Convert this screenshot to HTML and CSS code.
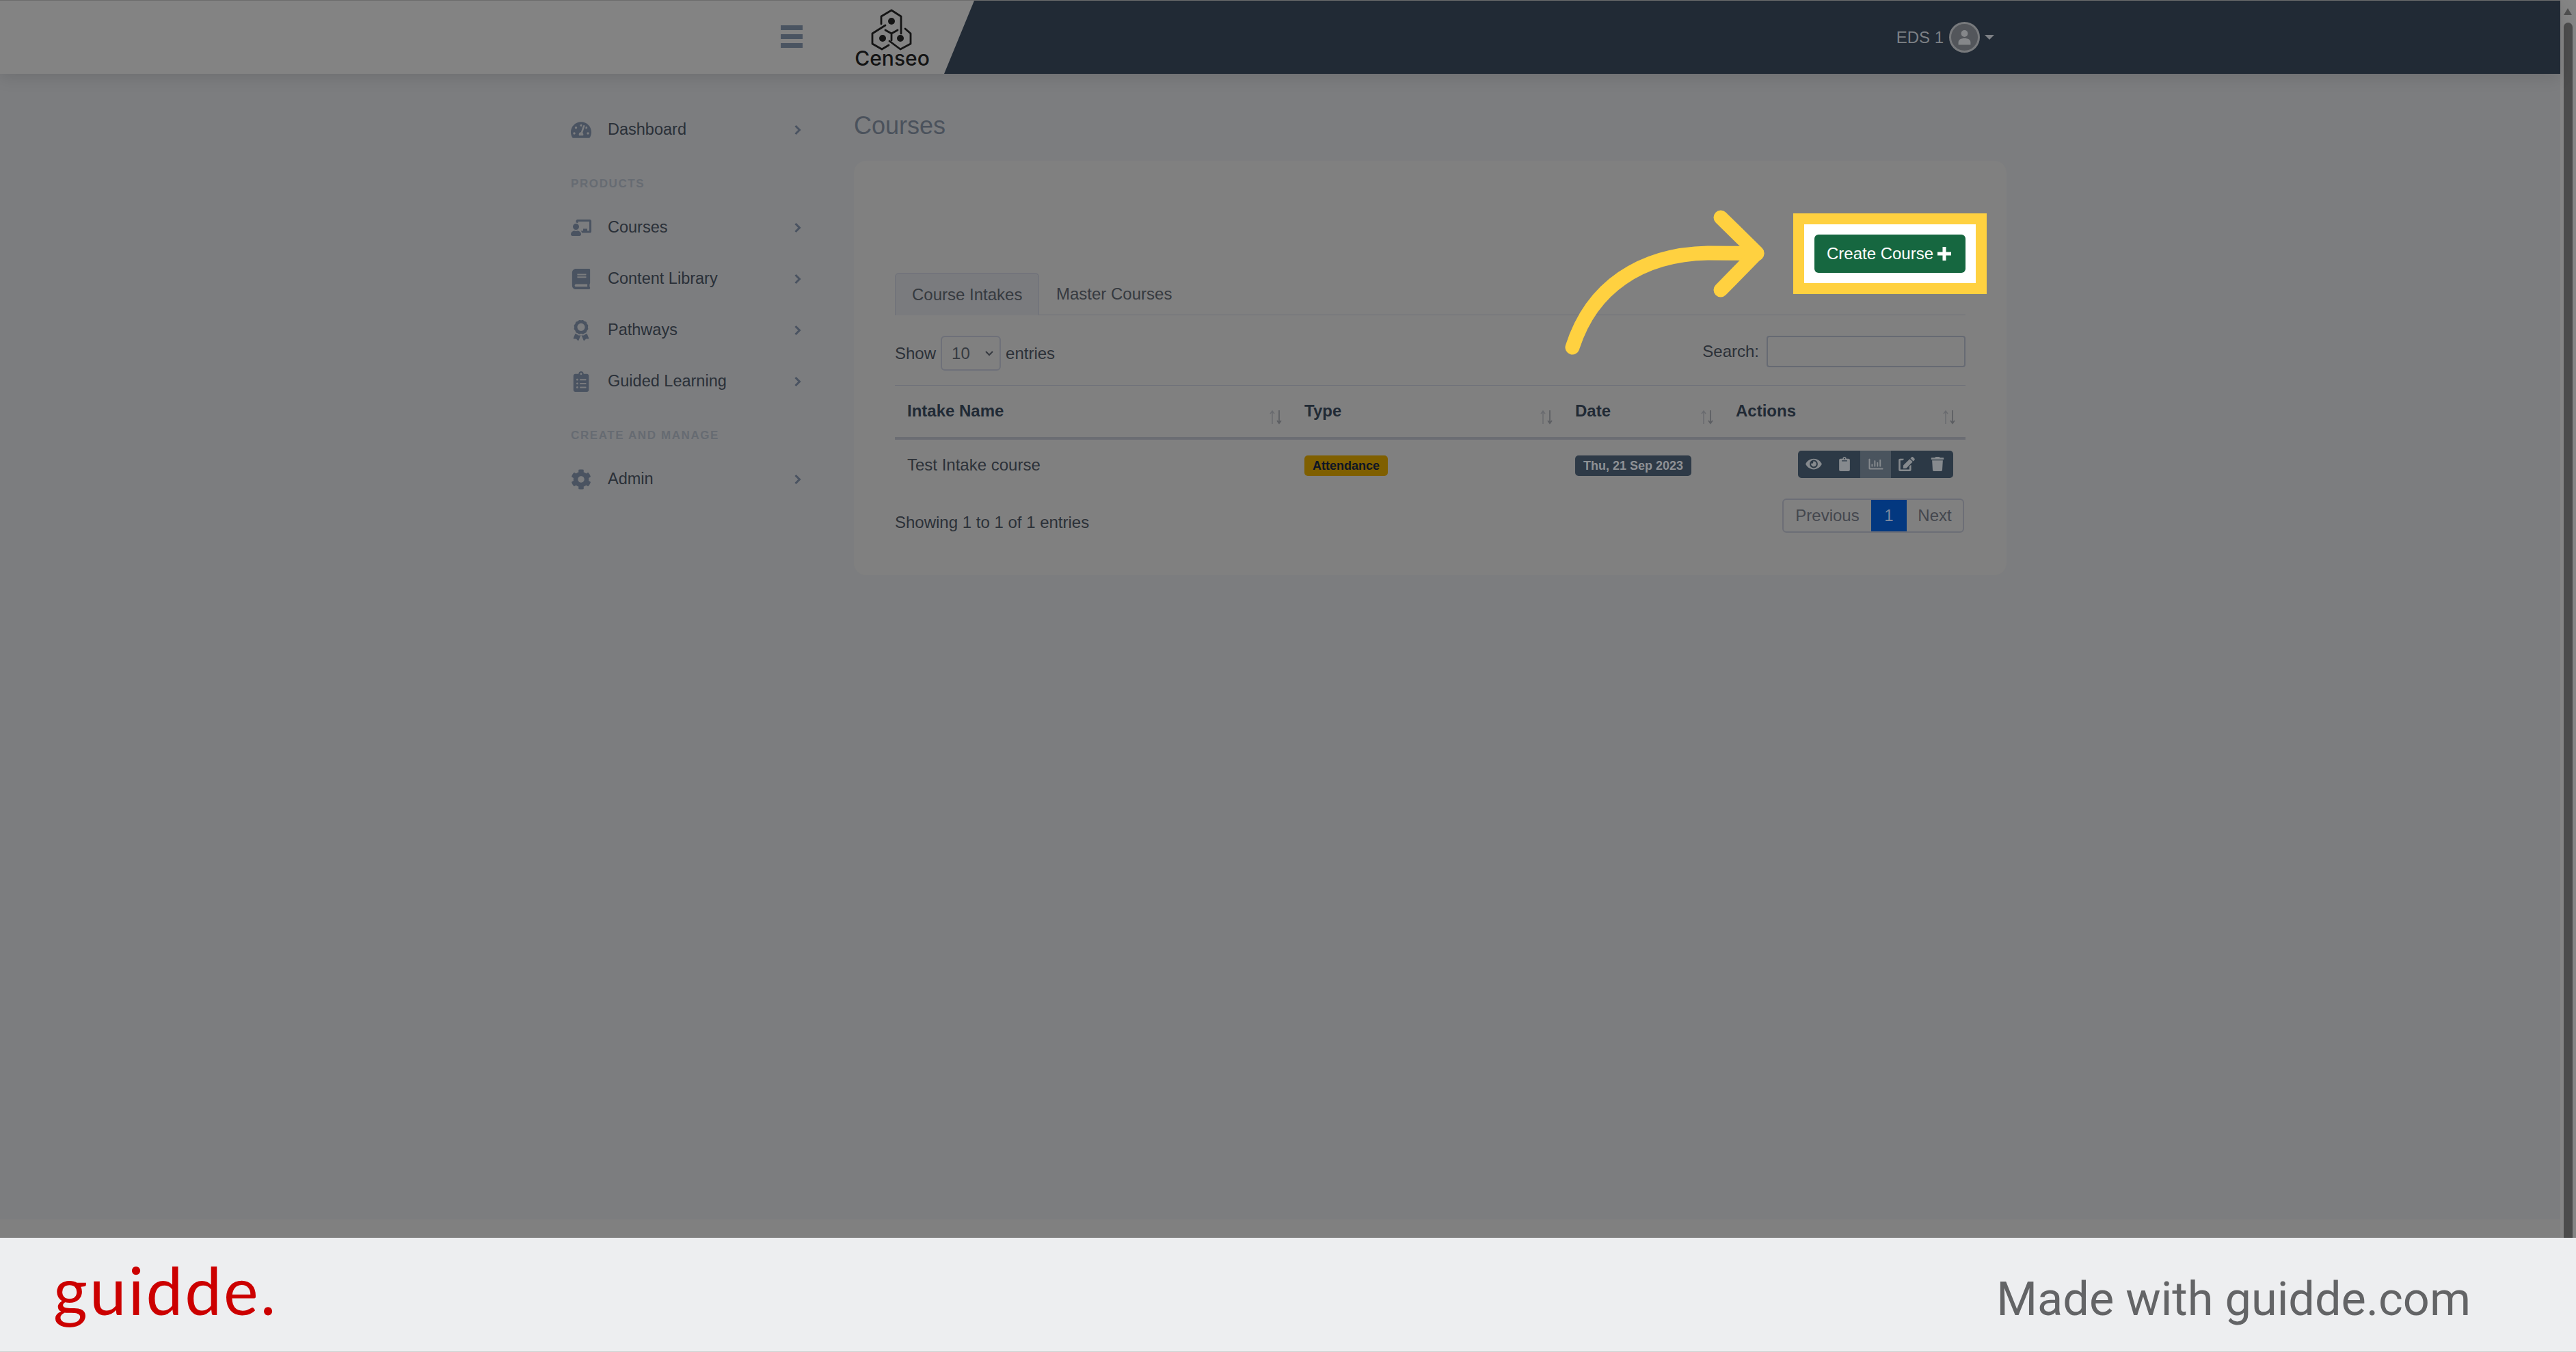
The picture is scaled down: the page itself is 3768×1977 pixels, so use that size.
FILE: index.html
```html
<!DOCTYPE html>
<html lang="en">
<head>
  <meta charset="UTF-8">
  <title>Courses</title>
  <link rel="stylesheet" href="styles.css">
</head>

<body>
  <svg class="defs" width="0" height="0">
    <symbol id="i-chevron" viewBox="0 0 11 16"><path d="M2.500 2l6 6-6 6" fill="none" stroke="currentColor" stroke-width="3"/></symbol>
    <symbol id="i-sort" viewBox="0 0 22 22"><path d="M6 21V2M3 6l3-4 3 4" fill="none" stroke="#696b6f" stroke-width="1.500"/><path d="M16 1v19M13 16l3 4 3-4" fill="none" stroke="#5c5e62" stroke-width="1.700"/></symbol>
  </svg>

  <div class="window">
    <div class="page">
      <header class="topbar">
        <div class="topbar-left">
          <div class="burger"><span></span><span></span><span></span></div>
          <div class="logo">
            <svg class="logo-mark" viewBox="0 0 90 70">
              <g fill="none" stroke="#141414" stroke-width="2.800" stroke-linejoin="round" stroke-linecap="round">
                <path d="M29 28V17L44 8l14 9v25"/>
                <path d="M35 30L16 42v15l14 8 10-6"/>
                <path d="M41 53l16 12 15-8V42l-8-7"/>
                <path d="M35 37l9 5 9-5M44 42v10"/>
              </g>
              <g fill="#141414">
                <circle cx="44" cy="24" r="5"/>
                <circle cx="31" cy="49" r="5"/>
                <circle cx="57" cy="49" r="5"/>
              </g>
            </svg>
            <span class="logo-name">Censeo</span>
          </div>
        </div>
        <div class="topbar-right">
          <span class="user-name">EDS 1</span>
          <span class="avatar">
            <svg viewBox="0 0 24 24"><circle cx="12" cy="8" r="3.600"/><path d="M5.500 20v-2.500c0-3 2.500-4.500 6.500-4.500s6.500 1.500 6.500 4.500V20z"/></svg>
          </span>
          <span class="caret"></span>
        </div>
      </header>

      <div class="layout">
        <nav class="sidebar">
          <a class="side-item" href="#">
            <svg class="side-icon" viewBox="0 0 576 512"><path d="M288 32C128.94 32 0 160.94 0 320c0 52.8 14.25 102.26 39.06 144.8 5.61 9.62 16.3 15.2 27.44 15.2h443c11.14 0 21.83-5.58 27.44-15.2C561.75 422.26 576 372.8 576 320c0-159.06-128.94-288-288-288zm0 64c14.71 0 26.58 10.13 30.32 23.65-1.11 2.26-2.64 4.23-3.45 6.67l-9.22 27.67c-5.13 3.49-10.97 6.01-17.64 6.01-17.67 0-32-14.33-32-32S270.33 96 288 96zM96 384c-17.67 0-32-14.33-32-32s14.33-32 32-32 32 14.33 32 32-14.33 32-32 32zm48-160c-17.67 0-32-14.33-32-32s14.33-32 32-32 32 14.33 32 32-14.33 32-32 32zm246.77-72.41l-61.33 184C343.13 347.33 352 364.54 352 384c0 11.72-3.38 22.55-8.88 32H232.88c-5.5-9.45-8.88-20.28-8.88-32 0-33.94 26.5-61.43 59.9-63.59l61.34-184.01c4.17-12.56 17.73-19.45 30.36-15.17 12.57 4.19 19.35 17.79 15.17 30.36zm14.66 57.2l15.52-46.55c3.47-1.29 7.13-2.23 11.05-2.23 17.67 0 32 14.33 32 32s-14.33 32-32 32c-11.38-.01-20.89-6.28-26.57-15.22zM480 384c-17.67 0-32-14.33-32-32s14.33-32 32-32 32 14.33 32 32-14.33 32-32 32z"/></svg>
            <span class="side-label">Dashboard</span>
            <svg class="side-chevron"><use href="#i-chevron"/></svg>
          </a>

          <div class="side-heading">PRODUCTS</div>

          <a class="side-item" href="#">
            <svg class="side-icon" viewBox="0 0 640 512"><path d="M208 352c-2.39 0-4.78.35-7.06 1.09C187.98 357.3 174.35 360 160 360c-14.35 0-27.98-2.7-40.95-6.91-2.28-.74-4.66-1.09-7.05-1.09C49.94 352-.33 402.48 0 464.62.14 490.88 21.73 512 48 512h224c26.27 0 47.86-21.12 48-47.38.33-62.14-49.94-112.62-112-112.62zm-48-32c53.02 0 96-42.98 96-96s-42.98-96-96-96-96 42.98-96 96 42.98 96 96 96zM592 0H208c-26.47 0-48 22.25-48 49.59V96c23.42 0 45.1 6.78 64 17.8V64h352v288h-64v-64H384v64h-76.24c19.1 16.69 33.12 38.73 39.69 64H592c26.47 0 48-22.25 48-49.59V49.59C640 22.25 618.47 0 592 0z"/></svg>
            <span class="side-label">Courses</span>
            <svg class="side-chevron"><use href="#i-chevron"/></svg>
          </a>
          <a class="side-item" href="#">
            <svg class="side-icon" viewBox="0 0 448 512"><path d="M448 360V24c0-13.3-10.7-24-24-24H96C43 0 0 43 0 96v320c0 53 43 96 96 96h328c13.3 0 24-10.7 24-24v-16c0-7.5-3.5-14.3-8.9-18.7-4.2-15.4-4.2-59.3 0-74.7 5.4-4.3 8.9-11.1 8.9-18.6zM128 134c0-3.3 2.7-6 6-6h212c3.3 0 6 2.7 6 6v20c0 3.3-2.7 6-6 6H134c-3.3 0-6-2.7-6-6v-20zm0 64c0-3.3 2.7-6 6-6h212c3.3 0 6 2.7 6 6v20c0 3.3-2.7 6-6 6H134c-3.3 0-6-2.7-6-6v-20zm253.4 250H96c-17.7 0-32-14.3-32-32 0-17.6 14.4-32 32-32h285.4c-1.9 17.1-1.9 46.9 0 64z"/></svg>
            <span class="side-label">Content Library</span>
            <svg class="side-chevron"><use href="#i-chevron"/></svg>
          </a>
          <a class="side-item" href="#">
            <svg class="side-icon" viewBox="0 0 384 512"><path d="M97.12 362.63c-8.69-8.69-4.16-6.24-25.12-11.85-9.51-2.55-17.87-7.45-25.43-13.32L1.2 448.7c-4.39 10.77 3.81 22.47 15.43 22.03l52.69-2.01L105.56 507c8 8.44 22.04 5.81 26.43-4.96l52.05-127.62c-10.84 6.04-22.87 9.58-35.31 9.58-19.5 0-37.82-7.59-51.61-21.37zM382.8 448.7l-45.37-111.24c-7.56 5.88-15.92 10.77-25.43 13.32-21.07 5.64-16.45 3.18-25.12 11.85-13.79 13.78-32.12 21.37-51.62 21.37-12.44 0-24.47-3.55-35.31-9.58L252 502.04c4.39 10.77 18.44 13.4 26.43 4.96l36.25-38.28 52.69 2.01c11.62.44 19.82-11.27 15.43-22.03zM263 340c15.28-15.55 17.03-14.21 38.79-20.14 13.89-3.79 24.75-14.84 28.47-28.98 7.48-28.4 5.54-24.97 25.95-45.75 10.17-10.35 14.14-25.44 10.42-39.58-7.47-28.38-7.48-24.42 0-52.83 3.72-14.14-.25-29.23-10.42-39.58-20.41-20.78-18.47-17.36-25.95-45.75-3.72-14.14-14.58-25.19-28.47-28.98-27.88-7.61-24.52-5.62-44.95-26.41-10.17-10.35-25-14.4-38.89-10.61-27.87 7.6-23.98 7.61-51.9 0-13.89-3.79-28.72.25-38.89 10.61-20.41 20.78-17.05 18.8-44.94 26.41-13.89 3.79-24.75 14.84-28.47 28.98-7.47 28.39-5.54 24.97-25.95 45.75-10.17 10.35-14.15 25.44-10.42 39.58 7.47 28.36 7.48 24.4 0 52.82-3.72 14.14.25 29.23 10.42 39.59 20.41 20.78 18.47 17.35 25.95 45.75 3.72 14.14 14.58 25.19 28.47 28.98C104.6 325.96 106.27 325 121 340c13.23 13.47 33.84 15.88 49.74 5.82a39.676 39.676 0 0 1 42.53 0c15.89 10.06 36.5 7.65 49.73-5.82zM97.66 175.96c0-53.03 42.24-96.02 94.34-96.02s94.34 42.99 94.34 96.02-42.24 96.02-94.34 96.02-94.34-42.99-94.34-96.02z"/></svg>
            <span class="side-label">Pathways</span>
            <svg class="side-chevron"><use href="#i-chevron"/></svg>
          </a>
          <a class="side-item" href="#">
            <svg class="side-icon" viewBox="0 0 384 512"><path d="M336 64h-80c0-35.3-28.7-64-64-64s-64 28.7-64 64H48C21.5 64 0 85.5 0 112v352c0 26.5 21.5 48 48 48h288c26.5 0 48-21.5 48-48V112c0-26.5-21.5-48-48-48zM96 424c-13.3 0-24-10.7-24-24s10.7-24 24-24 24 10.7 24 24-10.7 24-24 24zm0-96c-13.3 0-24-10.7-24-24s10.7-24 24-24 24 10.7 24 24-10.7 24-24 24zm0-96c-13.3 0-24-10.7-24-24s10.7-24 24-24 24 10.7 24 24-10.7 24-24 24zm96-192c13.3 0 24 10.7 24 24s-10.7 24-24 24-24-10.7-24-24 10.7-24 24-24zm128 368c0 4.4-3.6 8-8 8H168c-4.4 0-8-3.6-8-8v-16c0-4.4 3.6-8 8-8h144c4.4 0 8 3.6 8 8v16zm0-96c0 4.4-3.6 8-8 8H168c-4.4 0-8-3.6-8-8v-16c0-4.4 3.6-8 8-8h144c4.4 0 8 3.6 8 8v16zm0-96c0 4.4-3.6 8-8 8H168c-4.4 0-8-3.6-8-8v-16c0-4.4 3.6-8 8-8h144c4.4 0 8 3.6 8 8v16z"/></svg>
            <span class="side-label">Guided Learning</span>
            <svg class="side-chevron"><use href="#i-chevron"/></svg>
          </a>

          <div class="side-heading">CREATE AND MANAGE</div>

          <a class="side-item" href="#">
            <svg class="side-icon" viewBox="0 0 512 512"><path d="M487.4 315.7l-42.6-24.6c4.3-23.2 4.3-47 0-70.2l42.6-24.6c4.9-2.8 7.1-8.6 5.5-14-11.1-35.6-30-67.8-54.7-94.6-3.8-4.1-10-5.1-14.8-2.3L380.8 110c-17.9-15.4-38.5-27.3-60.8-35.1V25.8c0-5.6-3.9-10.5-9.4-11.7-36.7-8.2-74.3-7.8-109.2 0-5.5 1.2-9.4 6.1-9.4 11.7V75c-22.2 7.9-42.8 19.8-60.8 35.1L88.7 85.5c-4.9-2.8-11-1.9-14.8 2.3-24.7 26.7-43.6 58.9-54.7 94.6-1.7 5.4.6 11.2 5.5 14L67.3 221c-4.3 23.2-4.3 47 0 70.2l-42.6 24.6c-4.9 2.8-7.1 8.6-5.5 14 11.1 35.6 30 67.8 54.7 94.6 3.8 4.1 10 5.1 14.8 2.3l42.6-24.6c17.9 15.4 38.5 27.3 60.8 35.1v49.2c0 5.6 3.9 10.5 9.4 11.7 36.7 8.2 74.3 7.8 109.2 0 5.5-1.2 9.4-6.1 9.4-11.7v-49.2c22.2-7.9 42.8-19.8 60.8-35.1l42.6 24.6c4.9 2.8 11 1.9 14.8-2.3 24.7-26.7 43.6-58.9 54.7-94.6 1.5-5.5-.7-11.3-5.6-14.1zM256 336c-44.1 0-80-35.9-80-80s35.9-80 80-80 80 35.9 80 80-35.9 80-80 80z"/></svg>
            <span class="side-label">Admin</span>
            <svg class="side-chevron"><use href="#i-chevron"/></svg>
          </a>
        </nav>

        <main class="content">
          <h1 class="page-title">Courses</h1>

          <section class="card">
            <div class="card-actions">
              <div class="spotlight">
                <button class="btn-create" type="button">Create Course
                  <svg class="plus" viewBox="0 0 22 22"><path d="M8.500 1h5v7.500H21v5h-7.500V21h-5v-7.500H1v-5h7.500z"/></svg>
                </button>
              </div>
            </div>

            <div class="tabs">
              <a class="tab tab-active" href="#">Course Intakes</a>
              <a class="tab" href="#">Master Courses</a>
            </div>

            <div class="table-controls">
              <label class="length">Show
                <span class="select-wrap">
                  <select><option>10</option></select>
                  <svg class="select-arrow" viewBox="0 0 14 9"><path d="M2 2l5 5 5-5" fill="none" stroke="#363a40" stroke-width="2"/></svg>
                </span>
                entries</label>
              <label class="search">Search: <input type="text"></label>
            </div>

            <table class="intakes">
              <colgroup>
                <col class="col-name"><col class="col-type"><col class="col-date"><col class="col-actions">
              </colgroup>
              <thead>
                <tr>
                  <th>Intake Name<svg class="sort"><use href="#i-sort"/></svg></th>
                  <th>Type<svg class="sort"><use href="#i-sort"/></svg></th>
                  <th>Date<svg class="sort"><use href="#i-sort"/></svg></th>
                  <th>Actions<svg class="sort"><use href="#i-sort"/></svg></th>
                </tr>
              </thead>
              <tbody>
                <tr>
                  <td>Test Intake course</td>
                  <td><span class="badge badge-type">Attendance</span></td>
                  <td><span class="badge badge-date">Thu, 21 Sep 2023</span></td>
                  <td>
                    <div class="action-group">
                      <a class="action" href="#"><svg viewBox="0 0 576 512"><path d="M572.52 241.4C518.29 135.59 410.93 64 288 64S57.68 135.64 3.48 241.41a32.35 32.35 0 0 0 0 29.19C57.71 376.41 165.07 448 288 448s230.32-71.64 284.52-177.41a32.35 32.35 0 0 0 0-29.19zM288 400a144 144 0 1 1 144-144 143.93 143.93 0 0 1-144 144zm0-240a95.31 95.31 0 0 0-25.31 3.79 47.85 47.85 0 0 1-66.9 66.9A95.78 95.78 0 1 0 288 160z"/></svg></a>
                      <a class="action" href="#"><svg viewBox="0 0 384 512"><path d="M384 112v352c0 26.51-21.49 48-48 48H48c-26.51 0-48-21.49-48-48V112c0-26.51 21.49-48 48-48h80c0-35.29 28.71-64 64-64s64 28.71 64 64h80c26.51 0 48 21.49 48 48zM192 40c-13.255 0-24 10.745-24 24s10.745 24 24 24 24-10.745 24-24-10.745-24-24-24m96 114v-20a6 6 0 0 0-6-6H102a6 6 0 0 0-6 6v20a6 6 0 0 0 6 6h180a6 6 0 0 0 6-6z"/></svg></a>
                      <a class="action action-active" href="#"><svg viewBox="0 0 512 512"><path d="M396.8 352h22.4c6.4 0 12.8-6.4 12.8-12.8V108.8c0-6.4-6.4-12.8-12.8-12.8h-22.4c-6.4 0-12.8 6.4-12.8 12.8v230.4c0 6.4 6.4 12.8 12.8 12.8zm-192 0h22.4c6.4 0 12.8-6.4 12.8-12.8V140.8c0-6.4-6.4-12.8-12.8-12.8h-22.4c-6.4 0-12.8 6.4-12.8 12.8v198.4c0 6.4 6.4 12.8 12.8 12.8zm96 0h22.4c6.4 0 12.8-6.4 12.8-12.8V204.8c0-6.4-6.4-12.8-12.8-12.8h-22.4c-6.4 0-12.8 6.4-12.8 12.8v134.4c0 6.4 6.4 12.8 12.8 12.8zM496 400H48V80c0-8.84-7.16-16-16-16H16C7.16 64 0 71.16 0 80v336c0 17.67 14.33 32 32 32h464c8.84 0 16-7.16 16-16v-16c0-8.84-7.16-16-16-16zm-387.2-48h22.4c6.4 0 12.8-6.4 12.8-12.8v-70.4c0-6.4-6.4-12.8-12.8-12.8h-22.4c-6.4 0-12.8 6.4-12.8 12.8v70.4c0 6.4 6.4 12.8 12.8 12.8z"/></svg></a>
                      <a class="action" href="#"><svg viewBox="0 0 576 512"><path d="M402.6 83.2l90.2 90.2c3.8 3.8 3.8 10 0 13.8L274.4 405.6l-92.8 10.3c-12.4 1.4-22.9-9.1-21.5-21.5l10.3-92.8L388.8 83.2c3.8-3.8 10-3.8 13.8 0zm162-22.9l-48.8-48.8c-15.2-15.2-39.9-15.2-55.2 0l-35.4 35.4c-3.8 3.8-3.8 10 0 13.8l90.2 90.2c3.8 3.8 10 3.8 13.8 0l35.4-35.4c15.2-15.3 15.2-40 0-55.2zM384 346.2V448H64V128h73.1c3.2 0 6.2-1.3 8.5-3.5l40-40c7.6-7.6 2.2-20.5-8.5-20.5H48C21.5 64 0 85.5 0 112v352c0 26.5 21.5 48 48 48h352c26.5 0 48-21.5 48-48V306.2c0-10.7-12.9-16-20.5-8.5l-40 40c-2.2 2.3-3.5 5.3-3.5 8.5z"/></svg></a>
                      <a class="action" href="#"><svg viewBox="0 0 448 512"><path d="M432 32H312l-9.4-18.7A24 24 0 0 0 281.1 0H166.8a23.72 23.72 0 0 0-21.4 13.3L136 32H16A16 16 0 0 0 0 48v32a16 16 0 0 0 16 16h416a16 16 0 0 0 16-16V48a16 16 0 0 0-16-16zM53.2 467a48 48 0 0 0 47.9 45h245.8a48 48 0 0 0 47.9-45L416 128H32z"/></svg></a>
                    </div>
                  </td>
                </tr>
              </tbody>
            </table>

            <div class="table-footer">
              <div class="table-info">Showing 1 to 1 of 1 entries</div>
              <div class="pager">
                <a class="pager-btn pager-prev" href="#">Previous</a>
                <a class="pager-btn pager-current" href="#">1</a>
                <a class="pager-btn pager-next" href="#">Next</a>
              </div>
            </div>

            <!-- pointer to the highlighted button -->
            <svg class="pointer" viewBox="0 0 330 240">
              <path d="M30 218C58 130 130 82 228 80c28 0 50 0 72 1" fill="none" stroke="#ffd140" stroke-width="21" stroke-linecap="round"/>
              <path d="M247 28l53 52-53 54" fill="none" stroke="#ffd140" stroke-width="21" stroke-linecap="round" stroke-linejoin="round"/>
            </svg>
          </section>
        </main>
      </div>

      <div class="page-foot"></div>
    </div>

    <div class="scrollbar">
      <span class="scroll-up"></span>
      <span class="scroll-thumb"></span>
    </div>
  </div>

  <footer class="brand-bar">
    <span class="brand-logo">guidde.</span>
    <span class="brand-text">Made with guidde.com</span>
  </footer>
</body>
</html>
```

FILE: styles.css
```css
* {
  box-sizing: border-box;
}

body {
  margin: 0;
  width: 3768px;
  height: 1977px;
  display: flex;
  flex-direction: column;
  overflow: hidden;
  background: #7c7d7f;
  font-family: "Liberation Sans", Arial, sans-serif;
  font-size: 24px;
  color: #2c3138;
}

a {
  color: inherit;
  text-decoration: none;
}

.defs {
  position: absolute;
}

.window {
  display: flex;
  height: 1810px;
}

.page {
  flex: 1;
  display: flex;
  flex-direction: column;
}

/* top bar */
.topbar {
  position: relative;
  z-index: 1;
  display: flex;
  height: 108px;
  flex-shrink: 0;
  background: #838383;
  border-top: 1px solid #6c6c6c;
  box-shadow: 0 6px 22px rgba(0, 0, 0, 0.11);
}

.topbar-left {
  width: 1381px;
  display: flex;
  align-items: center;
  padding-left: 1142px;
}

.burger {
  width: 32px;
  display: flex;
  flex-direction: column;
  gap: 3px;
}

.burger span {
  height: 7px;
  margin-bottom: 3px;
  background: #4a5461;
}

.logo {
  width: 90px;
  margin-left: 86px;
  display: flex;
  flex-direction: column;
  align-items: center;
}

.logo-mark {
  width: 90px;
  height: 70px;
  margin-top: -4px;
}

.logo-name {
  margin-top: -6px;
  font-family: Inter, sans-serif;
  font-size: 30px;
  line-height: 28px;
  font-weight: 500;
  white-space: nowrap;
  color: #141414;
}

.topbar-right {
  flex: 1;
  display: flex;
  align-items: center;
  justify-content: flex-end;
  padding-right: 828px;
  background: #212a35;
  clip-path: polygon(44px 0, 100% 0, 100% 100%, 0 100%);
  color: #7d8085;
}

.user-name {
  margin-right: 8px;
}

.avatar {
  width: 45px;
  height: 45px;
  border: 3px solid #77797c;
  border-radius: 50%;
  background: #53565b;
  display: flex;
  align-items: center;
  justify-content: center;
}

.avatar svg {
  width: 33px;
  height: 33px;
  fill: #85878a;
}

.caret {
  width: 0;
  height: 0;
  margin-left: 7px;
  border-left: 7px solid transparent;
  border-right: 7px solid transparent;
  border-top: 7px solid #7d8085;
}

/* page body */
.layout {
  flex: 1;
  display: flex;
  padding-left: 835px;
}

.page-foot {
  height: 27px;
  background: #808080;
}

/* sidebar */
.sidebar {
  width: 414px;
  padding: 44px 77px 0 0;
}

.side-item {
  height: 75px;
  display: flex;
  align-items: center;
  gap: 24px;
  font-size: 23.5px;
  color: #2a3038;
}

.side-icon {
  width: 30px;
  height: 30px;
  fill: #4a5361;
}

.side-label {
  flex: 1;
}

.side-chevron {
  width: 11px;
  height: 16px;
  color: #4a5361;
}

.side-heading {
  height: 68px;
  padding-top: 32px;
  font-size: 17px;
  line-height: 20px;
  font-weight: bold;
  letter-spacing: 1.6px;
  color: #666b72;
}

/* content */
.content {
  width: 1686px;
  padding-top: 55px;
}

.page-title {
  margin: 0 0 30px;
  font-size: 36px;
  line-height: 42px;
  font-weight: normal;
  color: #4b525c;
}

.card {
  position: relative;
  height: 606px;
  padding: 108px 60px 0;
  background: #808080;
  border-radius: 18px;
}

.card-actions {
  display: flex;
  justify-content: flex-end;
}

.spotlight {
  margin: -31px -31px;
  padding: 15px;
  border: 16px solid #ffd140;
  background: #fff;
}

.btn-create {
  width: 221px;
  height: 56px;
  display: flex;
  align-items: center;
  justify-content: center;
  gap: 5px;
  padding: 0 2px 0 0;
  border: none;
  border-radius: 6px;
  background: #166740;
  color: #fff;
  font: 24px "Liberation Sans", Arial, sans-serif;
}

.plus {
  width: 22px;
  height: 22px;
  fill: #fff;
}

.pointer {
  position: absolute;
  left: 1021px;
  top: 55px;
  width: 330px;
  height: 240px;
}

/* tabs */
.tabs {
  display: flex;
  height: 62px;
  border-bottom: 1px solid #6e7079;
}

.tab {
  height: 62px;
  padding: 0 25px;
  display: flex;
  align-items: center;
  white-space: nowrap;
  color: #363a40;
}

.tab-active {
  width: 211px;
  padding: 0 24px;
  background: #7a7b7e;
  border: 1px solid #6e7079;
  border-bottom: none;
  border-radius: 6px 6px 0 0;
}

/* datatable */
.table-controls {
  height: 102px;
  padding-top: 30px;
  display: flex;
  justify-content: space-between;
  align-items: flex-start;
}

.length {
  height: 51px;
  display: flex;
  align-items: center;
  gap: 7px;
  padding-top: 1px;
}

.select-wrap {
  position: relative;
  display: block;
  width: 88px;
  height: 51px;
  margin-top: -1px;
}

.select-wrap select {
  width: 88px;
  height: 51px;
  padding-left: 14px;
  appearance: none;
  background: #808080;
  border: 2px solid #6e7079;
  border-radius: 6px;
  color: #363a40;
  font: 24px "Liberation Sans", Arial, sans-serif;
}

.select-arrow {
  position: absolute;
  right: 10px;
  top: 21px;
  width: 14px;
  height: 9px;
}

.search {
  height: 46px;
  display: flex;
  align-items: center;
  gap: 11px;
}

.search input {
  width: 291px;
  height: 46px;
  background: #808080;
  border: 2px solid #666a73;
  border-radius: 4px;
}

.intakes {
  width: 100%;
  table-layout: fixed;
  border-collapse: collapse;
}

.col-name { width: 581px; }
.col-type { width: 396px; }
.col-date { width: 235px; }
.col-actions { width: 354px; }

.intakes th {
  position: relative;
  height: 77px;
  padding: 0 18px;
  text-align: left;
  color: #212a35;
  border-top: 1px solid #6e7079;
  border-bottom: 4px solid #6b6d73;
}

.sort {
  position: absolute;
  right: 13px;
  bottom: 18px;
  width: 22px;
  height: 22px;
}

.intakes td {
  height: 76px;
  padding: 0 18px;
}

.badge {
  display: inline-block;
  height: 30px;
  margin-top: 2px;
  padding: 0 12px;
  border-radius: 5px;
  font-size: 18px;
  line-height: 30px;
  font-weight: bold;
  vertical-align: middle;
}

.badge-type {
  background: #7f5f00;
  color: #0e1526;
}

.badge-date {
  background: #2e3a47;
  color: #8e9195;
}

.action-group {
  display: flex;
  width: fit-content;
  height: 40px;
  margin: -2px 0 0 auto;
  background: #2c3946;
  border-radius: 5px;
  overflow: hidden;
}

.action {
  width: 45.4px;
  display: flex;
  align-items: center;
  justify-content: center;
}

.action svg {
  width: 24px;
  height: 21px;
  fill: #868a8e;
}

.action-active {
  background: #4a545e;
}

.table-footer {
  margin-top: 12px;
  display: flex;
  justify-content: space-between;
  padding-right: 2px;
}

.table-info {
  padding-top: 17px;
  line-height: 36px;
}

.pager {
  display: flex;
  height: 50px;
  border: 2px solid #6c6e76;
  border-radius: 6px;
  overflow: hidden;
}

.pager-btn {
  display: flex;
  align-items: center;
  justify-content: center;
  color: #44474e;
}

.pager-prev {
  width: 128px;
}

.pager-current {
  width: 52px;
  margin: -2px 0;
  background: #033880;
  color: #7f8a9e;
}

.pager-next {
  width: 82px;
}

/* browser scrollbar */
.scrollbar {
  position: relative;
  width: 23px;
  background: #858585;
}

.scroll-up {
  position: absolute;
  left: 5px;
  top: 12px;
  border-left: 6.5px solid transparent;
  border-right: 6.5px solid transparent;
  border-bottom: 10px solid #505050;
}

.scroll-thumb {
  position: absolute;
  left: 5px;
  top: 33px;
  bottom: 0;
  width: 13px;
  border-radius: 7px 7px 0 0;
  background: #4c4c4c;
}

/* recording banner */
.brand-bar {
  height: 167px;
  padding: 0 154px 0 78px;
  display: flex;
  align-items: center;
  justify-content: space-between;
  background: #edeef0;
  border-bottom: 1px solid #cfd2d2;
}

.brand-logo {
  font-family: Lato, sans-serif;
  font-size: 96px;
  line-height: 110px;
  letter-spacing: 3px;
  color: #cc0000;
  margin-top: -14px;
}

.brand-text {
  font-family: Roboto, sans-serif;
  font-size: 68.5px;
  color: #636466;
  margin-top: 12px;
}
```
